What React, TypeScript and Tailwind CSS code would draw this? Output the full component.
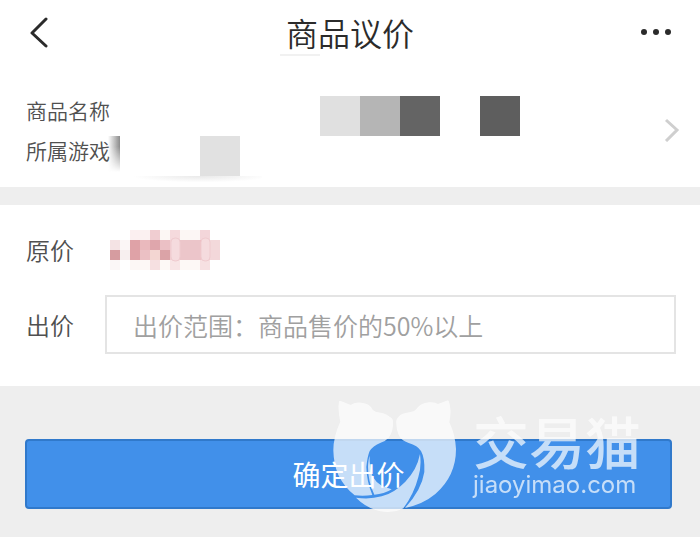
import { useState } from 'react';

const NAME_CELLS = [
    { x: 200, color: '#e0e0e0' },
    { x: 240, color: '#b5b5b5' },
    { x: 280, color: '#646464' },
    { x: 360, color: '#5e5e5e' },
];

// one string per row of 10px cells
const PRICE_CELLS = [
    ['#ffffff', '#ffffff', '#fbeff0', '#fbf1f1', '#f0cdd1', '#fcf7f4', '#f5dadd', '#fcf7f4', '#fcf6f5', '#f3d6da', '#ffffff'],
    ['#f4e3e4', '#fbf6f6', '#dfa2a7', '#eab9bd', '#dfa6ac', '#ebc0c5', '#f2d0d3', '#ecc6ca', '#ebc5c9', '#eebfc4', '#f3d9db'],
    ['#d69ca0', '#f7efef', '#dfa2a7', '#ebc0c4', '#f3d6d2', '#dba3a7', '#f1cdd1', '#ecc6ca', '#ecc5ca', '#efc3c8', '#f3d7da'],
    ['#fbf7f7', '#ffffff', '#fcf7f5', '#fdf8f6', '#f6e0e1', '#fdf9f6', '#f8e5e6', '#fdf9f6', '#fdf8f6', '#f6e0e2', '#ffffff'],
];

function NameMosaic() {
    return (
        <svg width="400" height="40" className="block shrink-0" shapeRendering="crispEdges" aria-hidden="true">
            {NAME_CELLS.map((cell) => (
                <rect key={cell.x} x={cell.x} width="40" height="40" fill={cell.color} />
            ))}
        </svg>
    );
}

function GameMosaic() {
    return (
        <svg width="160" height="50" className="block shrink-0" aria-hidden="true">
            <defs>
                <linearGradient id="edge" x1="0" x2="1" y1="0" y2="0">
                    <stop offset="0" stopColor="#777" stopOpacity="0" />
                    <stop offset="1" stopColor="#777" stopOpacity="0.85" />
                </linearGradient>
                <linearGradient id="edgeFade" x1="0" x2="0" y1="0" y2="1">
                    <stop offset="0.3" stopColor="#fff" />
                    <stop offset="1" stopColor="#000" />
                </linearGradient>
                <mask id="edgeMask">
                    <rect width="12" height="36" fill="url(#edgeFade)" />
                </mask>
                <radialGradient id="below" cx="0.55" cy="0" r="0.5" gradientTransform="scale(1 1.6)">
                    <stop offset="0" stopColor="#e9e9e9" />
                    <stop offset="1" stopColor="#fff" />
                </radialGradient>
            </defs>
            <rect width="12" height="36" fill="url(#edge)" mask="url(#edgeMask)" />
            <rect x="18" y="40" width="136" height="8" fill="url(#below)" />
            <rect x="92" width="40" height="40" fill="#e1e1e1" />
        </svg>
    );
}

function PriceMosaic() {
    return (
        <svg width="110" height="40" className="block" aria-hidden="true">
            <g shapeRendering="crispEdges">
                {PRICE_CELLS.map((row, y) =>
                    row.map((color, x) => (
                        <rect key={`${x}-${y}`} x={x * 10} y={y * 10} width="10" height="10" fill={color} />
                    ))
                )}
            </g>
            <g fill="#f5dbde" stroke="#efcbcf">
                <rect x="61" y="8" width="9" height="23" rx="4" />
                <rect x="91" y="8" width="9" height="23" rx="4" />
            </g>
        </svg>
    );
}

function Watermark() {
    return (
        <div className="pointer-events-none absolute right-[59px] top-[14px] flex gap-4 text-white opacity-70" aria-hidden="true">
            <svg width="124" height="114" viewBox="41 33 372 342" fill="currentColor">
                <path d="M59 37Q62 34 70 38L94 48Q106 38 126 41Q151 43 160 62Q166 69 184 71Q203 75 212 84Q222 90 221 100Q222 128 208 146Q199 156 184 161Q160 171 151 186Q144 203 141 234Q142 278 159 318Q134 322 106 319Q76 296 57 258Q43 226 42 184Q42 143 63 98Q55 62 59 37Z" />
                <path d="M388 35Q384 33 378 37L356 45Q345 38 329 40Q304 42 291 60Q285 68 270 70Q247 73 238 83Q229 91 231 104Q232 128 242 145Q250 156 268 162Q295 170 305 186Q317 207 315 249Q307 303 257 357Q311 346 348 315Q410 261 410 180Q408 138 390 100Q398 62 388 35Z" />
                <path d="M302 195Q307 233 297 264Q284 315 252 358Q225 373 184 367Q142 358 110 326Q151 332 187 322Q225 312 258 278Q293 242 302 195Z" />
                <path d="M151 200Q149 231 160 263Q170 280 188 291L217 301Q194 316 165 317Q146 277 146 234Q147 211 151 200Z" />
            </svg>
            <div className="flex flex-col pt-[10px]">
                <span className="font-['Noto_Sans_CJK_SC',sans-serif] text-[56px] font-medium leading-[60px]">交易猫</span>
                <span className="font-['Inter',sans-serif] text-2xl font-normal leading-[30px]">jiaoyimao.com</span>
            </div>
        </div>
    );
}

export default function App() {
    const [offer, setOffer] = useState('');

    return (
        <div className="min-h-screen bg-[#eeeeee] font-['Noto_Sans_CJK_SC',sans-serif] font-[350] text-[#505050]">
            <header className="relative flex h-16 items-center justify-between bg-white px-[26px]">
                <button type="button" aria-label="返回" className="w-9">
                    <svg width="24" height="32" viewBox="0 0 24 32" fill="none" stroke="#2b2b2b" strokeWidth="3" strokeLinecap="round" strokeLinejoin="round">
                        <path d="M20 3L6 17L20 30" />
                    </svg>
                </button>
                <h1 className="text-[32px] leading-8 text-[#2b2b2b]">商品议价</h1>
                <button type="button" aria-label="更多" className="w-9">
                    <svg width="36" height="32" viewBox="0 0 36 32" fill="#2b2b2b">
                        <circle cx="6" cy="16" r="3" />
                        <circle cx="18" cy="16" r="3" />
                        <circle cx="30" cy="16" r="3" />
                    </svg>
                </button>
                <div className="absolute bottom-2 left-[40%] h-[2px] w-10 bg-[#f1f1f1]" />
            </header>

            <section className="flex items-center justify-between bg-white pb-[2px] pl-[26px] pr-5 pt-8 text-[21px]">
                <div>
                    <div className="flex h-10 items-start gap-[10px]">
                        <span className="w-[84px] leading-[28px]">商品名称</span>
                        <NameMosaic />
                    </div>
                    <div className="flex h-[49px] items-start">
                        <span className="w-[82px] whitespace-nowrap leading-[28px]">所属游戏</span>
                        <GameMosaic />
                    </div>
                </div>
                <button type="button" aria-label="查看商品" className="mb-[22px]">
                    <svg width="16" height="24" viewBox="0 0 16 24" fill="none" stroke="#cfcfcf" strokeWidth="3">
                        <path d="M2 2L13 12L2 23" />
                    </svg>
                </button>
            </section>

            <form onSubmit={(e) => e.preventDefault()}>
                <section className="mt-[18px] bg-white pb-8 pl-[26px] pr-6 pt-[25px] text-2xl">
                    <div className="flex h-10 items-center">
                        <span className="w-[84px]">原价</span>
                        <PriceMosaic />
                    </div>
                    <div className="mt-[25px] flex items-center">
                        <label htmlFor="offer" className="w-[79px] shrink-0">出价</label>
                        <input
                            id="offer"
                            type="text"
                            value={offer}
                            onChange={(e) => setOffer(e.target.value)}
                            placeholder="出价范围：商品售价的50%以上"
                            className="h-[59px] w-full min-w-0 border-2 border-[#e4e4e4] bg-white px-[26px] text-[25px] placeholder-[#a0a0a0] focus:outline-none"
                        />
                    </div>
                </section>

                <div className="relative pl-[25px] pr-7 pt-[53px]">
                    <button
                        type="submit"
                        className="h-[70px] w-full rounded border-2 border-[#3079cb] bg-[#4190ea] text-[28px] font-normal text-white"
                    >
                        确定出价
                    </button>
                    <Watermark />
                </div>
            </form>
        </div>
    );
}
